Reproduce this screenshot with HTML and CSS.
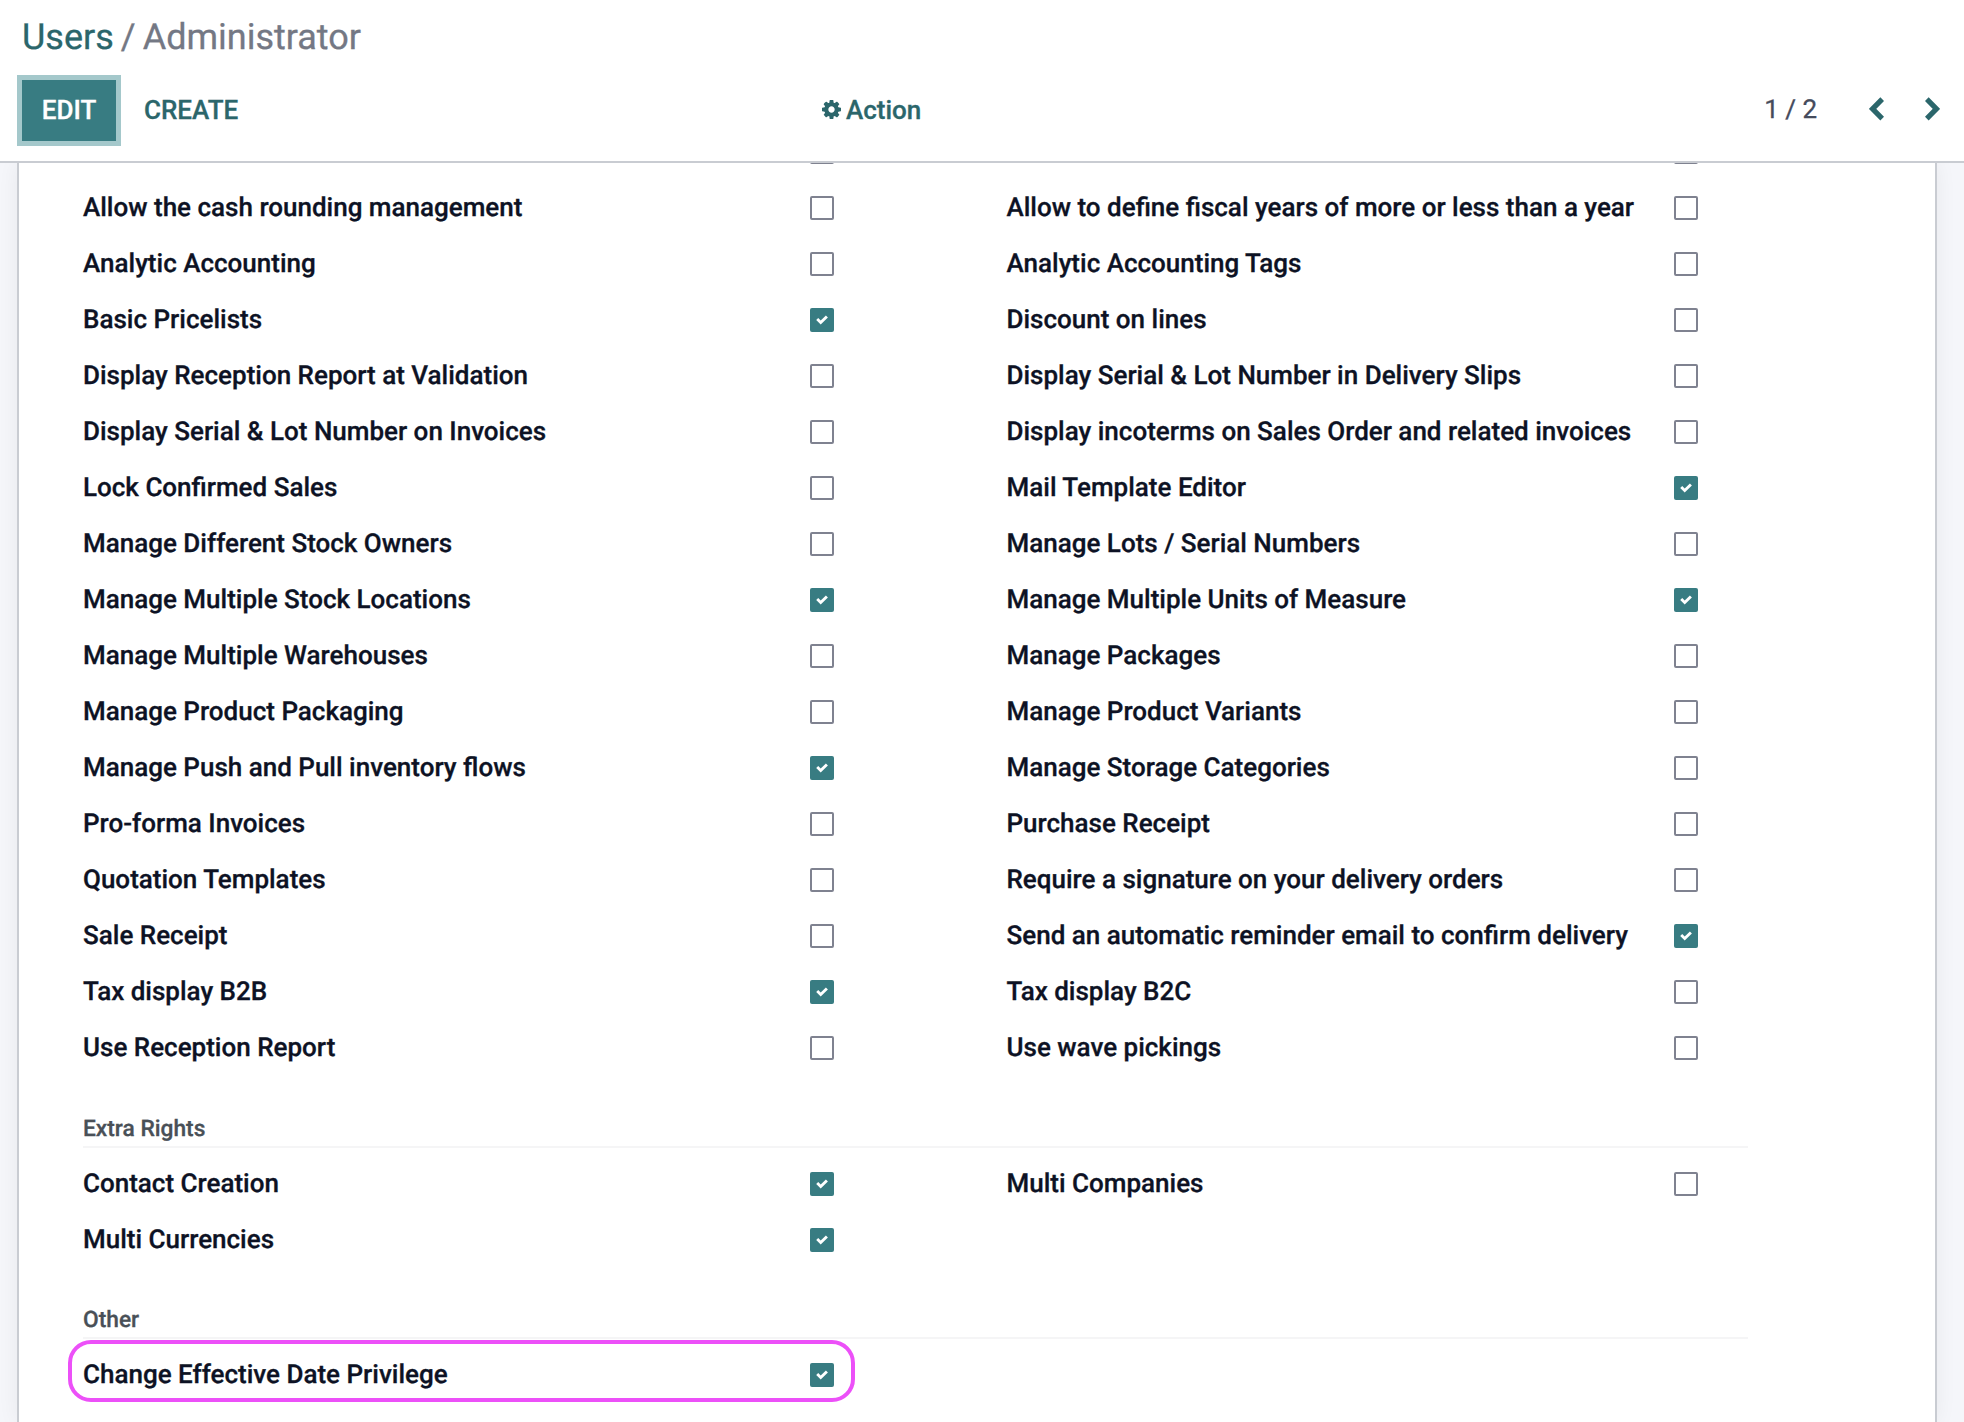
FILE: index.html
```html
<!DOCTYPE html>
<html lang="en">
<head>
<meta charset="utf-8">
<title>Administrator</title>
<link rel="stylesheet" href="styles.css">
</head>
<body>
<header class="panel">
  <nav class="crumbs"><a class="crumb-link">Users</a><span class="crumb-sep">/</span><span class="crumb-current">Administrator</span></nav>
  <div class="toolbar">
    <div class="buttons"><button class="btn primary">EDIT</button><button class="btn link">CREATE</button></div>
    <button class="action">
      <svg class="gear" viewBox="0 128 1536 1536"><path d="M1024 896q0-106-75-181t-181-75-181 75-75 181 75 181 181 75 181-75 75-181zm512-109v222q0 12-8 23t-20 13l-185 28q-19 54-39 91 35 50 107 138 10 12 10 25t-9 23q-27 37-99 108t-94 71q-12 0-26-9l-138-108q-44 23-91 38-16 136-29 186-7 28-36 28h-222q-14 0-24.500-8.500t-11.500-21.500l-28-184q-49-16-90-37l-141 107q-10 9-25 9-14 0-25-11-126-114-165-168-7-10-7-23 0-12 8-23 15-21 51-66.500t54-70.500q-27-50-41-99l-183-27q-13-2-21-12.500t-8-23.500v-222q0-12 8-23t19-13l186-28q14-46 39-92-40-57-107-138-10-12-10-24 0-10 9-23 26-36 98.500-107.500t94.500-71.500q13 0 26 10l138 107q44-23 91-38 16-136 29-186 7-28 36-28h222q14 0 24.500 8.500t11.500 21.500l28 184q49 16 90 37l142-107q9-9 24-9 13 0 25 10 129 119 165 170 7 8 7 22 0 12-8 23-15 21-51 66.500t-54 70.500q26 50 41 98l183 28q13 2 21 12.500t8 23.500z"/></svg><span>Action</span>
    </button>
    <div class="pager">
      <span class="count">1 / 2</span>
      <svg class="chev" viewBox="0 0 15 24"><path d="M13.200 2.200 3.600 11.900l9.600 9.700"/></svg>
      <svg class="chev" viewBox="0 0 15 24"><path d="M1.800 2.200l9.600 9.700-9.600 9.700"/></svg>
    </div>
  </div>
</header>
<main class="content">
  <div class="sheet">
    <div class="groups" id="groups"></div>
  </div>
</main>
<script src="app.js"></script>
</body>
</html>
```
FILE: styles.css
```css
*, *::before { box-sizing: border-box; }
body {
  margin: 0;
  height: 1422px;
  display: flex;
  flex-direction: column;
  overflow: hidden;
  background: #fff;
  font-family: Roboto, "Liberation Sans", sans-serif;
  font-size: 26px;
  color: #0d1224;
  text-rendering: geometricPrecision;
  -webkit-text-stroke: .3px currentColor;
}
button { border: 0; background: none; padding: 0; font: inherit; color: inherit; }
.panel { flex: none; height: 163px; border-bottom: 2px solid #c9ccd2; }
.crumbs {
  display: flex;
  height: 75px;
  padding: 0 0 1px 22px;
  align-items: center;
  font-size: 36px;
  color: #747884;
}
.crumb-link { color: #2b666b; }
.crumb-sep { padding: 0 7px; }
.toolbar {
  display: grid;
  grid-template-columns: 822px 1fr auto;
  height: 71px;
  align-items: center;
}
.buttons { display: flex; padding-left: 17px; align-items: center; }
.btn { height: 71px; font-weight: 500; padding-bottom: 2px; }
.primary { width: 104px; border: 5px solid #a4c8cb; background: #387c82; color: #fff; }
.link { padding-left: 23px; color: #2b666b; }
.action { display: flex; align-items: center; gap: 5px; padding-bottom: 2px; font-weight: 500; color: #2b666b; }
.gear { width: 19px; height: 19px; fill: currentColor; }
.pager { display: flex; align-items: center; padding: 0 24px 4px 0; color: #454b5c; }
.count { margin-right: 52px; padding-top: 2px; }
.chev { width: 15px; height: 24px; fill: none; stroke: #2b666b; stroke-width: 5.2; }
.chev + .chev { margin-left: 41px; }
.content { flex: 1; min-height: 0; padding: 0 27px 0 17px; background: #f5f6fa; overflow: hidden; }
.sheet {
  height: 100%;
  padding-left: 64px;
  border: solid #c9ccd2;
  border-width: 0 2px;
  background: #fff;
  box-shadow: 0 0 20px rgba(0, 0, 0, .06);
  overflow: hidden;
}
.groups { width: 1666px; margin-top: -39px; }
.grid { display: grid; grid-template-columns: 727px 196.500px 667.500px 75px; grid-auto-rows: 56px; align-items: center; }
.label { font-weight: 500; white-space: nowrap; }
.box { width: 24px; height: 24px; border: 2px solid #7f8290; border-radius: 2px; }
.box.on { border: 0; background: #387c82; }
.box svg { display: block; width: 24px; height: 24px; fill: #fff; }
.title {
  display: flex;
  align-items: flex-end;
  height: 72px;
  margin: 0 1px 8px 0;
  padding-bottom: 4px;
  border-bottom: 2px solid #f5f5f6;
  font-size: 22.750px;
  line-height: 26px;
  font-weight: 500;
  color: #495057;
}
.title.last { height: 71px; }
.marked { position: relative; }
.marked::before {
  content: "";
  position: absolute;
  left: -15px;
  top: -7px;
  width: 787px;
  height: 62px;
  border: 4px solid #ec50f8;
  border-radius: 23px;
}
```
FILE: app.js
```js
const sections = [
  { rows: [
    ["", 0, "", 0],
    ["Allow the cash rounding management", 0, "Allow to define fiscal years of more or less than a year", 0],
    ["Analytic Accounting", 0, "Analytic Accounting Tags", 0],
    ["Basic Pricelists", 1, "Discount on lines", 0],
    ["Display Reception Report at Validation", 0, "Display Serial & Lot Number in Delivery Slips", 0],
    ["Display Serial & Lot Number on Invoices", 0, "Display incoterms on Sales Order and related invoices", 0],
    ["Lock Confirmed Sales", 0, "Mail Template Editor", 1],
    ["Manage Different Stock Owners", 0, "Manage Lots / Serial Numbers", 0],
    ["Manage Multiple Stock Locations", 1, "Manage Multiple Units of Measure", 1],
    ["Manage Multiple Warehouses", 0, "Manage Packages", 0],
    ["Manage Product Packaging", 0, "Manage Product Variants", 0],
    ["Manage Push and Pull inventory flows", 1, "Manage Storage Categories", 0],
    ["Pro-forma Invoices", 0, "Purchase Receipt", 0],
    ["Quotation Templates", 0, "Require a signature on your delivery orders", 0],
    ["Sale Receipt", 0, "Send an automatic reminder email to confirm delivery", 1],
    ["Tax display B2B", 1, "Tax display B2C", 0],
    ["Use Reception Report", 0, "Use wave pickings", 0]
  ] },
  { title: "Extra Rights", rows: [
    ["Contact Creation", 1, "Multi Companies", 0],
    ["Multi Currencies", 1]
  ] },
  { title: "Other", last: true, rows: [["Change Effective Date Privilege", 1]] }
];

const tick = '<svg viewBox="0 0 24 24"><path d="M6.200 12.100l2-2 2.500 2.400 5.200-5.100 2 2-7.200 7.200z"/></svg>';

function field(text, on) {
  const label = document.createElement("div");
  label.className = "label";
  label.textContent = text;
  const box = document.createElement("div");
  box.className = on ? "box on" : "box";
  if (on) box.innerHTML = tick;
  return [label, box];
}

const root = document.getElementById("groups");
for (const s of sections) {
  if (s.title) {
    const h = document.createElement("h2");
    h.className = s.last ? "title last" : "title";
    h.textContent = s.title;
    root.append(h);
  }
  const grid = document.createElement("div");
  grid.className = s.last ? "grid marked" : "grid";
  for (const r of s.rows) {
    grid.append(...field(r[0], r[1]));
    if (r.length > 2) grid.append(...field(r[2], r[3]));
  }
  root.append(grid);
}
```
